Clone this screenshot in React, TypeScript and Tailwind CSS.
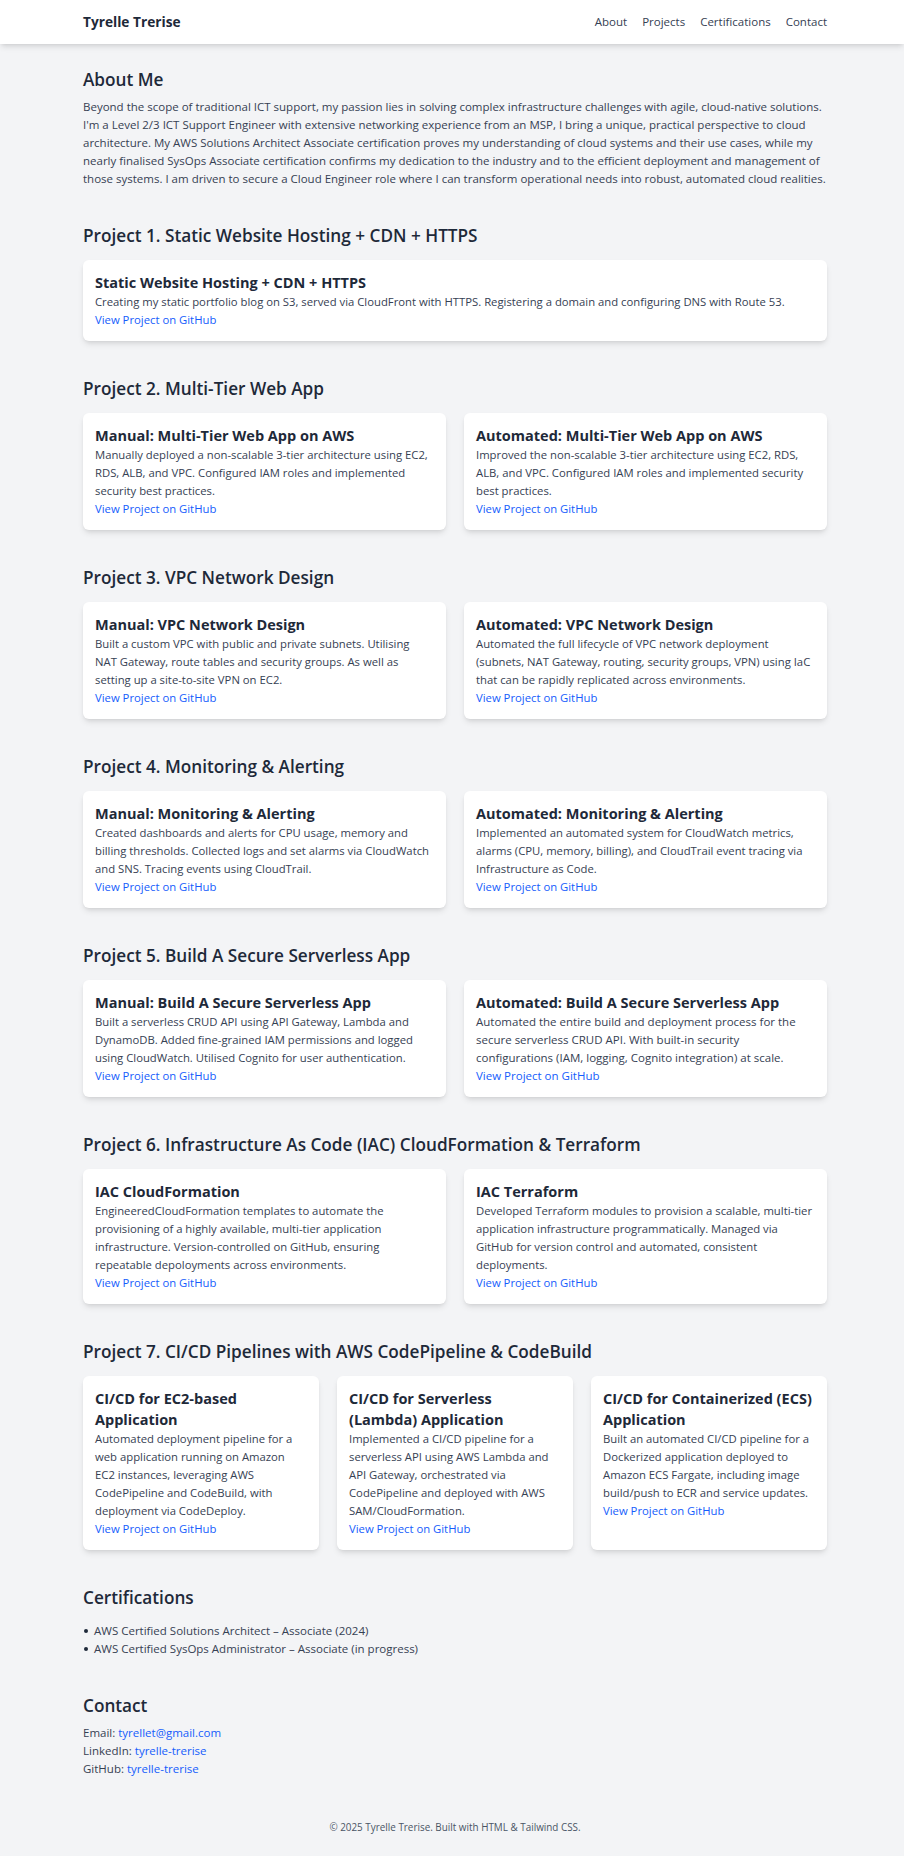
import React from "react";

type Card = { title: string; desc: string; size?: string };
type Project = { heading: string; cols: 1 | 2 | 3; cards: Card[] };

const projects: Project[] = [
  {
    heading: "Project 1. Static Website Hosting + CDN + HTTPS",
    cols: 1,
    cards: [
      {
        title: "Static Website Hosting + CDN + HTTPS",
        desc: "Creating my static portfolio blog on S3, served via CloudFront with HTTPS. Registering a domain and configuring DNS with Route 53.",
      },
    ],
  },
  {
    heading: "Project 2. Multi-Tier Web App",
    cols: 2,
    cards: [
      {
        title: "Manual: Multi-Tier Web App on AWS",
        desc: "Manually deployed a non-scalable 3-tier architecture using EC2, RDS, ALB, and VPC. Configured IAM roles and implemented security best practices.",
      },
      {
        title: "Automated: Multi-Tier Web App on AWS",
        desc: "Improved the non-scalable 3-tier architecture using EC2, RDS, ALB, and VPC. Configured IAM roles and implemented security best practices.",
      },
    ],
  },
  {
    heading: "Project 3. VPC Network Design",
    cols: 2,
    cards: [
      {
        title: "Manual: VPC Network Design",
        desc: "Built a custom VPC with public and private subnets. Utilising NAT Gateway, route tables and security groups. As well as setting up a site-to-site VPN on EC2.",
      },
      {
        title: "Automated: VPC Network Design",
        desc: "Automated the full lifecycle of VPC network deployment (subnets, NAT Gateway, routing, security groups, VPN) using IaC that can be rapidly replicated across environments.",
      },
    ],
  },
  {
    heading: "Project 4. Monitoring & Alerting",
    cols: 2,
    cards: [
      {
        title: "Manual: Monitoring & Alerting",
        desc: "Created dashboards and alerts for CPU usage, memory and billing thresholds. Collected logs and set alarms via CloudWatch and SNS. Tracing events using CloudTrail.",
      },
      {
        title: "Automated: Monitoring & Alerting",
        desc: "Implemented an automated system for CloudWatch metrics, alarms (CPU, memory, billing), and CloudTrail event tracing via Infrastructure as Code.",
      },
    ],
  },
  {
    heading: "Project 5. Build A Secure Serverless App",
    cols: 2,
    cards: [
      {
        title: "Manual: Build A Secure Serverless App",
        desc: "Built a serverless CRUD API using API Gateway, Lambda and DynamoDB. Added fine-grained IAM permissions and logged using CloudWatch. Utilised Cognito for user authentication.",
      },
      {
        title: "Automated: Build A Secure Serverless App",
        desc: "Automated the entire build and deployment process for the secure serverless CRUD API. With built-in security configurations (IAM, logging, Cognito integration) at scale.",
        size: "text-[11.5px]",
      },
    ],
  },
  {
    heading: "Project 6. Infrastructure As Code (IAC) CloudFormation & Terraform",
    cols: 2,
    cards: [
      {
        title: "IAC CloudFormation",
        desc: "EngineeredCloudFormation templates to automate the provisioning of a highly available, multi-tier application infrastructure. Version-controlled on GitHub, ensuring repeatable depoloyments across environments.",
      },
      {
        title: "IAC Terraform",
        desc: "Developed Terraform modules to provision a scalable, multi-tier application infrastructure programmatically. Managed via GitHub for version control and automated, consistent deployments.",
      },
    ],
  },
  {
    heading: "Project 7. CI/CD Pipelines with AWS CodePipeline & CodeBuild",
    cols: 3,
    cards: [
      {
        title: "CI/CD for EC2-based Application",
        desc: "Automated deployment pipeline for a web application running on Amazon EC2 instances, leveraging AWS CodePipeline and CodeBuild, with deployment via CodeDeploy.",
      },
      {
        title: "CI/CD for Serverless (Lambda) Application",
        desc: "Implemented a CI/CD pipeline for a serverless API using AWS Lambda and API Gateway, orchestrated via CodePipeline and deployed with AWS SAM/CloudFormation.",
      },
      {
        title: "CI/CD for Containerized (ECS) Application",
        desc: "Built an automated CI/CD pipeline for a Dockerized application deployed to Amazon ECS Fargate, including image build/push to ECR and service updates.",
      },
    ],
  },
];

const gridCols = {
  1: "grid-cols-1",
  2: "grid-cols-2",
  3: "grid-cols-3",
};

const certs = [
  "AWS Certified Solutions Architect – Associate (2024)",
  "AWS Certified SysOps Administrator – Associate (in progress)",
];

function SectionHeading({ children, tight }: { children: React.ReactNode; tight?: boolean }) {
  return (
    <h2 className={`text-[17.2px] leading-[24px] font-semibold text-gray-800 ${tight ? "mb-[6px]" : "mb-[12px]"}`}>
      {children}
    </h2>
  );
}

export default function App() {
  return (
    <div className="min-h-screen bg-gray-100 text-gray-800 font-['Open_Sans',sans-serif]">
      {/* Header */}
      <nav className="bg-white shadow-md">
        <div className="ml-[83px] w-[744px] h-[44px] flex items-center justify-between">
          <span className="text-[13.7px] leading-[20px] font-bold text-gray-800">Tyrelle Trerise</span>
          <div className="flex gap-[15px] text-[11.5px] leading-[18px] text-gray-700">
            <a href="#about">About</a>
            <a href="#projects">Projects</a>
            <a href="#certs">Certifications</a>
            <a href="#contact">Contact</a>
          </div>
        </div>
      </nav>

      <main className="ml-[83px] w-[744px] pt-[24px] pb-[24px] text-[11.5px] leading-[18px]">
        {/* About */}
        <section id="about" className="mb-[36px]">
          <SectionHeading tight>About Me</SectionHeading>
          <p className="text-gray-700">
            Beyond the scope of traditional ICT support, my passion lies in solving complex infrastructure challenges with agile, cloud-native solutions. I'm a Level 2/3 ICT Support Engineer with extensive networking experience from an MSP, I bring a unique, practical perspective to cloud architecture. My AWS Solutions Architect Associate certification proves my understanding of cloud systems and their use cases, while my nearly finalised SysOps Associate certification confirms my dedication to the industry and to the efficient deployment and management of those systems. I am driven to secure a Cloud Engineer role where I can transform operational needs into robust, automated cloud realities.
          </p>
        </section>

        {/* Projects */}
        <div id="projects">
          {projects.map((p) => (
            <section key={p.heading} className="mb-[36px]">
              <SectionHeading>{p.heading}</SectionHeading>
              <div className={`grid gap-[18px] ${gridCols[p.cols]}`}>
                {p.cards.map((c) => (
                  <div key={c.title} className={`bg-white rounded-[6px] shadow-md p-[12px] ${c.size ?? "text-[11.3px]"}`}>
                    <h3 className="text-[14.5px] leading-[21px] font-bold text-gray-800">{c.title}</h3>
                    <p className="text-gray-700">{c.desc}</p>
                    <a href="#" className="block text-blue-600">View Project on GitHub</a>
                  </div>
                ))}
              </div>
            </section>
          ))}
        </div>

        {/* Certifications */}
        <section id="certs" className="mb-[36px]">
          <SectionHeading>Certifications</SectionHeading>
          <ul className="text-gray-700">
            {certs.map((c) => (
              <li key={c} className="flex items-center">
                <span className="w-[4px] h-[4px] rounded-full bg-gray-800 ml-[1px] mr-[6px]" />
                {c}
              </li>
            ))}
          </ul>
        </section>

        {/* Contact */}
        <section id="contact">
          <SectionHeading tight>Contact</SectionHeading>
          <p className="text-gray-700">
            Email: <a href="#" className="text-blue-600">tyrellet@gmail.com</a>
          </p>
          <p className="text-gray-700">
            LinkedIn: <a href="#" className="text-blue-600">tyrelle-trerise</a>
          </p>
          <p className="text-gray-700">
            GitHub: <a href="#" className="text-blue-600">tyrelle-trerise</a>
          </p>
        </section>
      </main>

      <footer className="pl-[6px] pt-[18px] pb-[22px] text-center text-[9.9px] leading-[15px] text-gray-600">
        © 2025 Tyrelle Trerise. Built with HTML &amp; Tailwind CSS.
      </footer>
    </div>
  );
}
